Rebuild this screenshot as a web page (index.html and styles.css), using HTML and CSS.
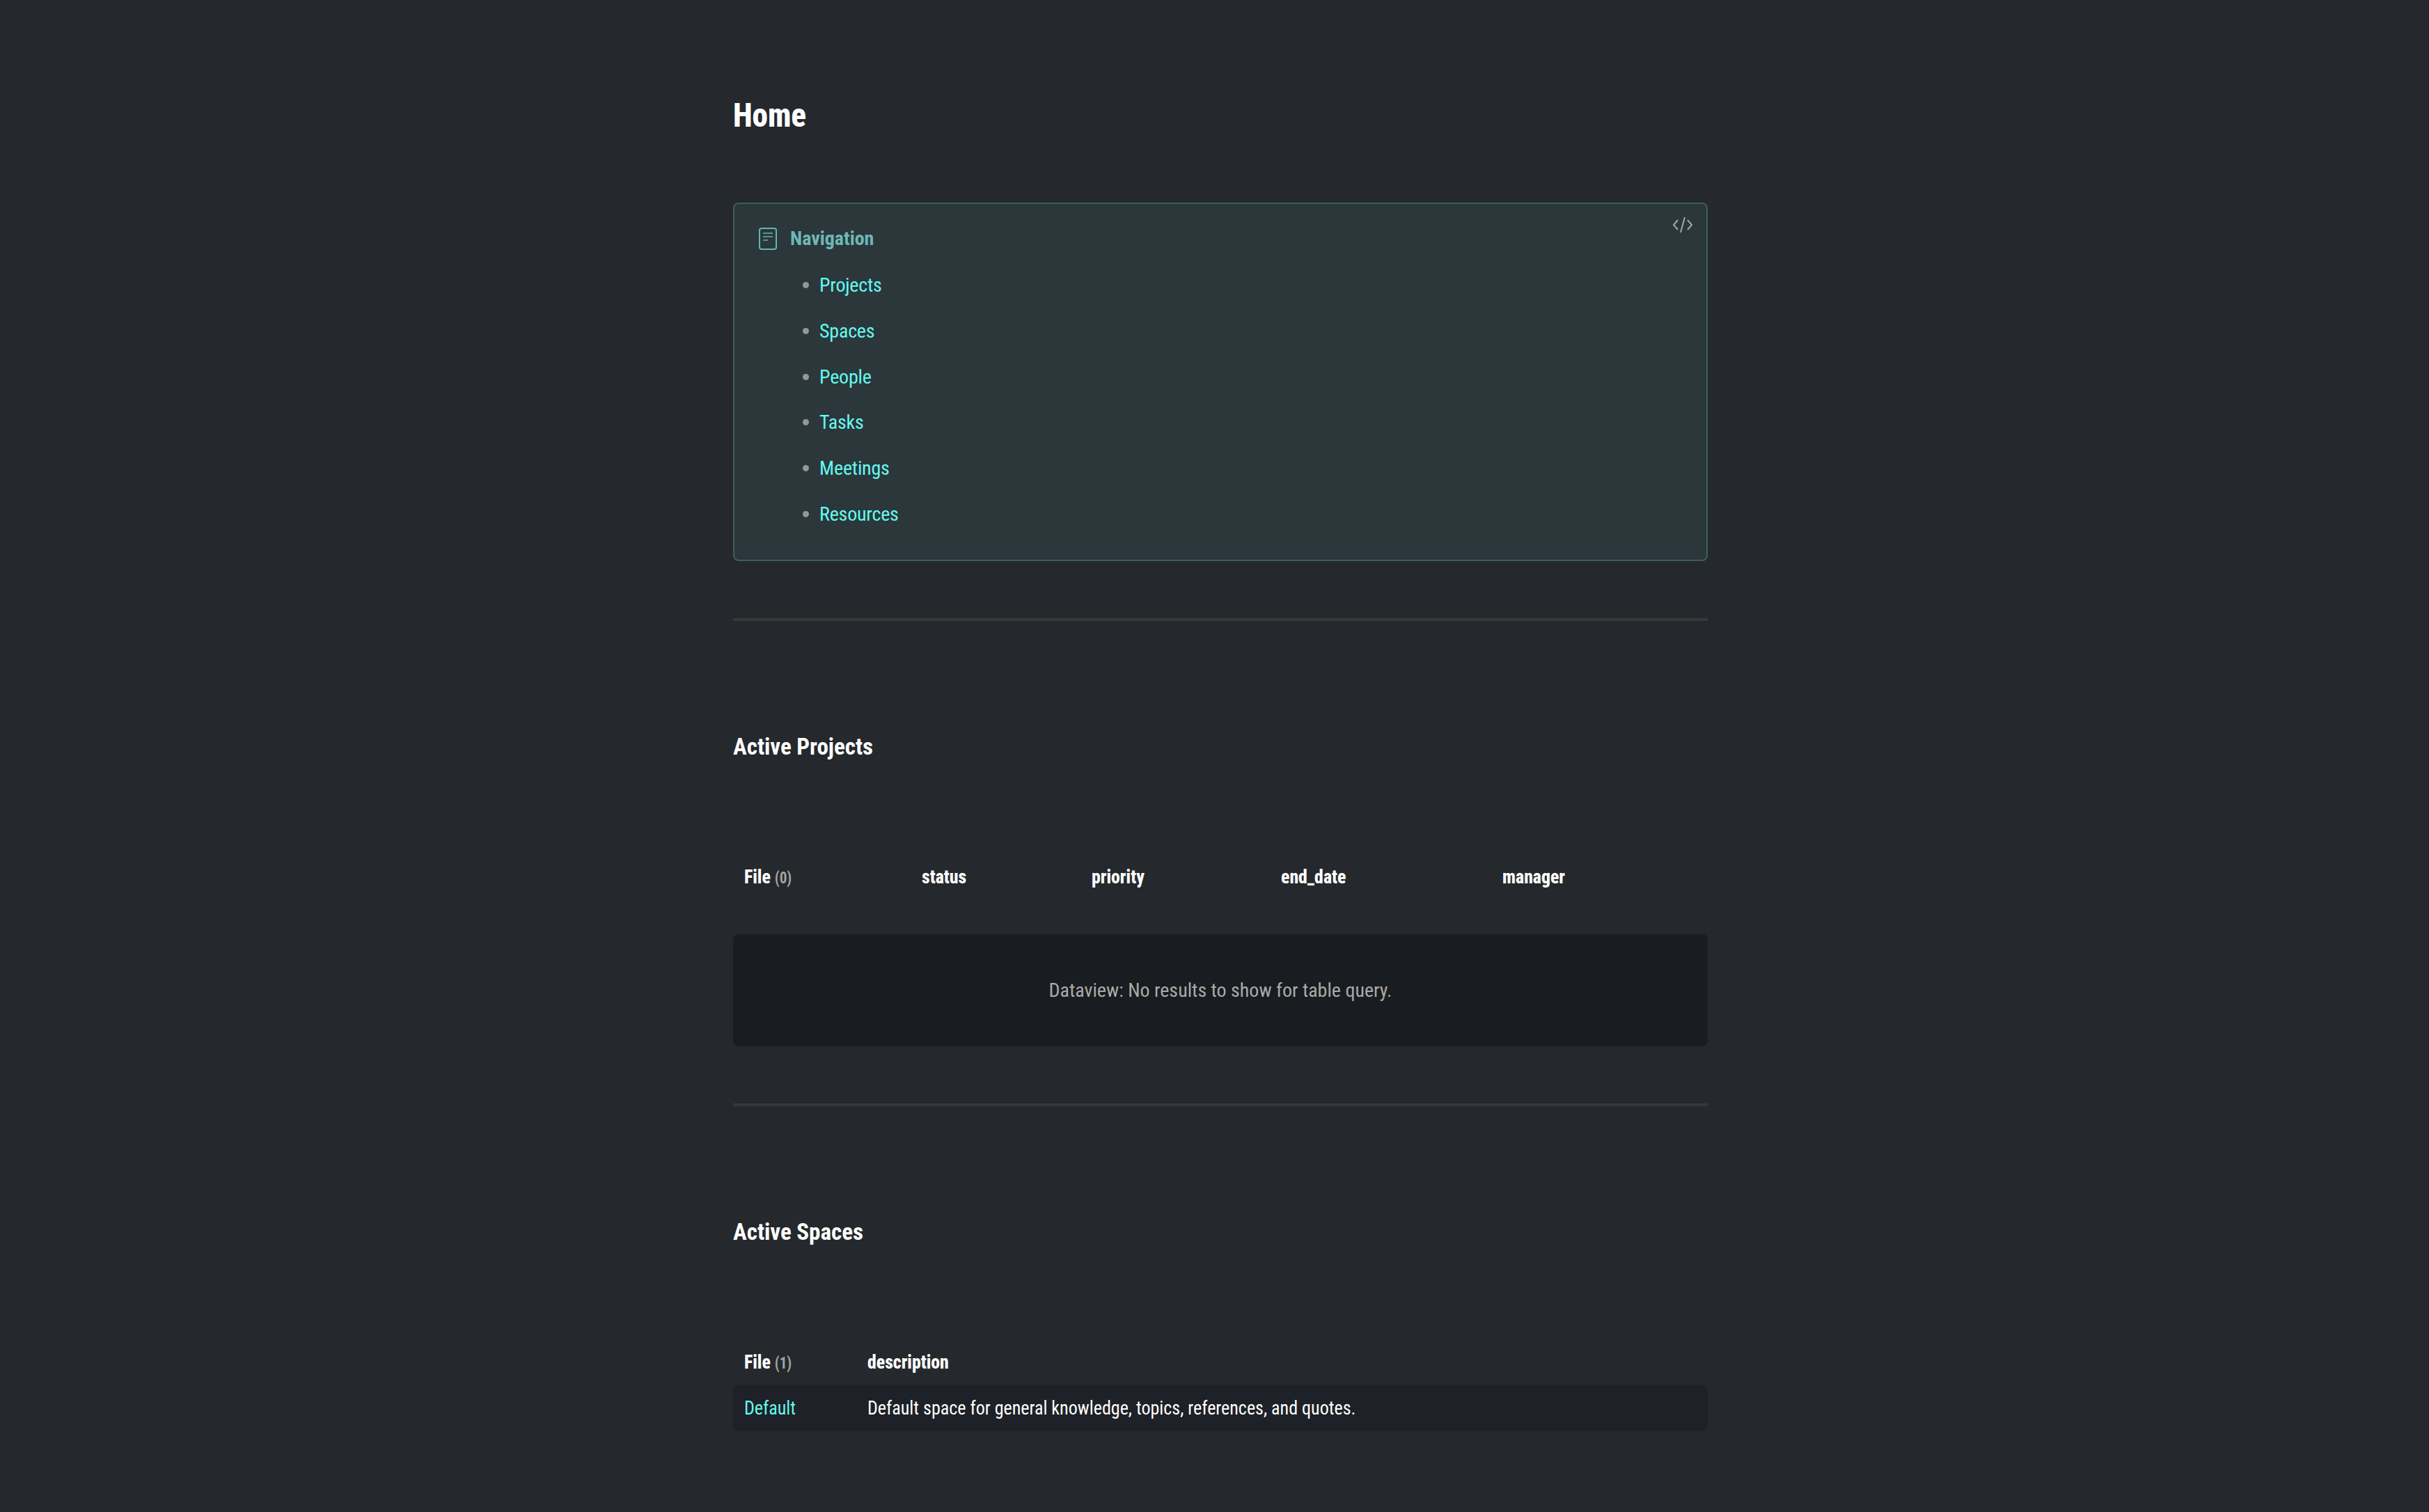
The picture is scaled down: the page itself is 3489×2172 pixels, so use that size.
FILE: index.html
```html
<!DOCTYPE html>
<html>
<head>
	<meta charset="utf-8">
	<title>Home</title>
	<link rel="stylesheet" href="styles.css">
</head>
<body>
	<div class="page">
		<h1><span>Home</span></h1>

		<div class="callout">
			<svg class="code-icon" viewBox="0 0 30 24" fill="none" stroke="#a3a8a8" stroke-width="2">
				<path d="M8 5 L2 12 L8 19"/>
				<path d="M22 5 L28 12 L22 19"/>
				<path d="M18 1 L12 23"/>
			</svg>
			<div class="callout-title">
				<svg class="note-icon" viewBox="0 0 26 32" fill="none" stroke="#67b2b0">
					<rect x="1" y="1" width="24" height="30" rx="3" stroke-width="2"/>
					<path d="M6 8 H20 M6 13 H20 M6 18 H13" stroke-width="1.500"/>
				</svg>
				<span>Navigation</span>
			</div>
			<ul class="nav-list">
				<li><a>Projects</a></li>
				<li><a>Spaces</a></li>
				<li><a>People</a></li>
				<li><a>Tasks</a></li>
				<li><a>Meetings</a></li>
				<li><a>Resources</a></li>
			</ul>
		</div>

		<hr>

		<h2>Active Projects</h2>

		<div class="cols cols-projects head">
			<div>File <small>(0)</small></div>
			<div>status</div>
			<div>priority</div>
			<div>end_date</div>
			<div>manager</div>
		</div>
		<div class="empty">Dataview: No results to show for table query.</div>

		<hr>

		<h2>Active Spaces</h2>

		<div class="cols cols-spaces head">
			<div>File <small>(1)</small></div>
			<div>description</div>
		</div>
		<div class="cols cols-spaces row">
			<div><a>Default</a></div>
			<div>Default space for general knowledge, topics, references, and quotes.</div>
		</div>
	</div>
</body>
</html>
```

FILE: styles.css
```css
html, body {
	margin: 0;
	background: #25282c;
}
body {
	padding-left: 17px;
	font-family: "Roboto Condensed", Roboto, sans-serif;
	font-stretch: condensed;
	font-size: 28px;
	font-weight: 450;
	line-height: 42px;
	color: #fff;
}
.page {
	width: 1400px;
	margin: 0 auto;
	padding: 131px 0 100px;
}
h1 {
	margin: 0 0 90px;
	font-size: 48px;
	line-height: 70px;
	font-weight: 800;
}
h1 span {
	display: inline-block;
	transform: scaleX(0.94);
	transform-origin: left;
}
h2 {
	margin: 0 0 141px;
	font-size: 33px;
	line-height: 50px;
	font-weight: 700;
}
hr {
	height: 4px;
	margin: 82px 0 156px;
	border: 0;
	background: #383838;
}
a {
	color: #64faf0;
}
.callout {
	position: relative;
	box-sizing: border-box;
	height: 515px;
	padding: 29px 35px 0;
	background: #2b373b;
	border: 2px solid #3b5f60;
	border-radius: 8px;
}
.code-icon {
	position: absolute;
	top: 18px;
	right: 19px;
	width: 30px;
	height: 24px;
}
.callout-title {
	display: flex;
	align-items: center;
	gap: 19px;
	color: #6db8b6;
	font-weight: 700;
}
.note-icon {
	width: 26px;
	height: 32px;
}
.nav-list {
	list-style: none;
	margin: 25px 0 0;
	padding: 0 0 0 87px;
}
.nav-list li {
	position: relative;
	margin-bottom: 23.800px;
	letter-spacing: -0.200px;
}
.nav-list li::before {
	content: "";
	position: absolute;
	left: -24px;
	top: 16px;
	width: 9px;
	height: 9px;
	border-radius: 50%;
	background: #969696;
}
.cols {
	display: grid;
	padding: 0 16px;
}
.cols > div {
	transform-origin: left;
}
.cols-projects {
	grid-template-columns: 255px 244px 272px 318px 1fr;
}
.cols-spaces {
	grid-template-columns: 177px 1fr;
}
.head {
	font-weight: 800;
}
.head > div {
	transform: scaleX(0.92);
}
.head small {
	font-size: 23px;
	font-weight: 700;
	color: #a3a3a3;
}
.empty {
	margin-top: 59px;
	height: 161px;
	line-height: 161px;
	text-align: center;
	background: #191c20;
	border-radius: 8px;
	color: #aaa;
}
.row {
	margin-top: 10px;
	height: 66px;
	line-height: 66px;
	background: #1e2127;
	border-radius: 8px;
}
.row > div {
	transform: scaleX(0.93);
}
```
